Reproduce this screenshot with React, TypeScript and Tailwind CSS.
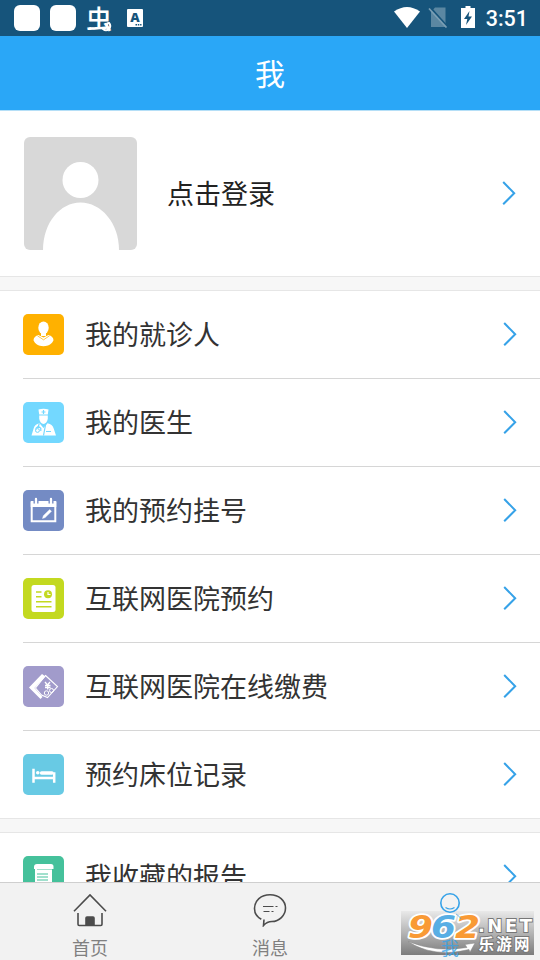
import React from "react"

const menuItems = [
	{ label: "我的就诊人", bg: "bg-[#ffb100]", icon: <PatientIcon /> },
	{ label: "我的医生", bg: "bg-[#73d8ff]", icon: <DoctorIcon /> },
	{ label: "我的预约挂号", bg: "bg-[#748bc4]", icon: <CalendarIcon /> },
	{ label: "互联网医院预约", bg: "bg-[#c3d920]", icon: <RecordIcon /> },
	{ label: "互联网医院在线缴费", bg: "bg-[#a19bcb]", icon: <PayIcon /> },
	{ label: "预约床位记录", bg: "bg-[#68cae4]", icon: <BedIcon /> },
]

function PatientIcon() {
	return (
		<svg viewBox="0 0 41 41" className="size-[41px]" fill="#fff">
			<ellipse cx="20.5" cy="13.8" rx="5.2" ry="6.3" />
			<path d="M18 18h5v4h-5z" />
			<path d="M15.5 21 20.500 23.500l5-2.500c3 .8 5 2.800 5 5.300-1 3-5 6-10 6s-9-3-10-6c0-2.500 2-4.500 5-5.300z" />
			<path
				d="m14.500 21.800 6 4 6-4"
				fill="none"
				stroke="#ffb100"
				strokeWidth=".7"
			/>
		</svg>
	)
}

function DoctorIcon() {
	return (
		<svg viewBox="0 0 41 41" className="size-[41px]" fill="#fff">
			<path d="M15.500 7.500q5-1.500 10 0l-.7 5h-8.600z" />
			<path d="M16.200 13.500h8.600v3.200q-1 4.800-4.300 5.300-3.300-.5-4.300-5.300z" />
			<path d="M16.500 21.300 20.500 26l4-4.700q5 1.200 6.100 5L33 33.500H8.500l2.200-7.200q1-3.800 5.800-5z" />
			<path d="M20.500 8v4M18.500 10h4" stroke="#73d8ff" strokeWidth="1.200" />
			<path
				d="m16.300 21.500-1 3m-2.300 5v-3.300l2.300-2 2.500 2V29m5-7.500-2.300 12m2.500-4h5"
				fill="none"
				stroke="#73d8ff"
				strokeWidth="1.200"
			/>
			<circle cx="14.500" cy="28.500" r="1.900" stroke="#73d8ff" />
		</svg>
	)
}

function CalendarIcon() {
	return (
		<svg viewBox="0 0 41 41" className="size-[41px]" fill="none" stroke="#fff">
			<path d="M8.700 13h23.600v18.300H8.700z" strokeWidth="2" />
			<path d="M7.700 11h25.600v6H7.700z" fill="#fff" stroke="none" />
			<path d="M13 9v4.500m15-4.500v4.500" stroke="#748bc4" strokeWidth="5" />
			<path d="M13 9v4.500m15-4.500v4.500" strokeWidth="2.300" strokeLinecap="round" />
			<path d="m19.500 28.500.8-2.800 6.400-6.200 1.800 1.800-6.300 6.300z" fill="#fff" strokeWidth=".4" />
		</svg>
	)
}

function RecordIcon() {
	return (
		<svg viewBox="0 0 41 41" className="size-[41px]">
			<rect x="8.500" y="7" width="24" height="27" rx="2.500" fill="#fff" />
			<path
				d="M13 14h5.500M13 18.700h5.500M13 23.700h15.500M13 28.700h15.500"
				stroke="#c3d920"
				strokeWidth="1.600"
			/>
			<circle cx="25" cy="16.300" r="4" fill="#c3d920" />
			<path d="M25 14v2.500h2.500" fill="none" stroke="#fff" strokeWidth="1.200" />
		</svg>
	)
}

function PayIcon() {
	return (
		<svg viewBox="0 0 41 41" className="size-[41px]" fill="none" stroke="#fff">
			<path d="M19 8 6 21.500 17.500 33l2-2-8-9L22.500 10.500z" fill="#fff" stroke="none" />
			<path d="m22.500 9.500 12 11-10 11-6-2.500-6-7z" strokeWidth="1.100" />
			<path
				d="m22 16 2.500 3 2.500-3m-5 3.500h5.500m-5.500 2h5.500M24.700 18.500v5"
				strokeWidth="1.300"
			/>
			<circle cx="23.500" cy="27" r="2.200" />
			<circle cx="28.500" cy="24.500" r="2" />
		</svg>
	)
}

function BedIcon() {
	return (
		<svg viewBox="0 0 41 41" className="size-[41px]" fill="none" stroke="#fff">
			<path d="M10.500 14.700v14m20.700-10.500v10.500" strokeWidth="2.500" />
			<path d="M10 24h22" strokeWidth="2.700" />
			<path d="M18.500 19h10.500" strokeWidth="3.300" strokeLinecap="round" />
			<circle cx="14.800" cy="18.700" r="1.800" fill="#fff" stroke="none" />
		</svg>
	)
}

function ReportIcon() {
	return (
		<svg viewBox="0 0 41 41" className="size-[41px]">
			<path d="M11 11q0-3 3-3h14q2.500 0 2.500 2.500V13H29v20H12V13h-1z" fill="#fff" />
			<path d="M14 13.500h15" stroke="#a5e0cd" strokeWidth="1" />
			<path d="M14 18h11M14 21h11M14 24h11" stroke="#45c19b" strokeWidth="1" />
		</svg>
	)
}

const Chevron = () => (
	<svg
		viewBox="0 0 14 24"
		className="mb-px h-6 w-3.5 shrink-0"
		fill="none"
		stroke="#36a2e8"
		strokeWidth="2"
	>
		<path d="m1.200 1 11 11.300-11 11" />
	</svg>
)

const MenuRow = (props: {
	label: string
	bg: string
	icon: React.ReactNode
	last?: boolean
}) => {
	const { label, bg, icon, last } = props

	return (
		<div
			className={`ml-[23px] flex h-[88px] items-center border-b pr-[23px] ${
				last ? "border-transparent" : "border-[#d6d6d6]"
			}`}
		>
			<div className={`size-[41px] shrink-0 overflow-hidden rounded-[5px] ${bg}`}>
				{icon}
			</div>
			<p className="mb-0.5 ml-[21px] flex-1 text-[27px] leading-10 text-[#333]">
				{label}
			</p>
			<Chevron />
		</div>
	)
}

const StatusBar = () => (
	<div className="flex h-9 shrink-0 items-center bg-[#16547b] pr-3 pl-3.5 text-white">
		<div className="size-[26px] rounded-md bg-white" />
		<div className="ml-2.5 size-[26px] rounded-md bg-white" />
		<div className="relative ml-2.5 h-9 w-[26px]">
			<p className="text-[26px] leading-9 font-medium">虫</p>
			<svg
				viewBox="0 0 10 12"
				className="absolute top-5 left-4 h-3 w-2.5"
				fill="none"
				stroke="#fff"
				strokeWidth="2"
				strokeLinecap="round"
			>
				<path d="M1 9q3 2.500 6 0 2.500-3 0-6Q4.500 3 5 5" />
			</svg>
		</div>
		<svg viewBox="0 0 16 18" className="ml-[15px] h-[18px] w-4">
			<rect width="16" height="18" rx="1" fill="#fff" />
			<text
				x="8"
				y="13"
				textAnchor="middle"
				fontSize="13"
				fontWeight="800"
				fill="#16547b"
				fontFamily="Open Sans, sans-serif"
			>
				A
			</text>
			<path d="M8.500 15.800h6" stroke="#16547b" strokeWidth="1.500" strokeDasharray="1.500 .8" />
		</svg>
		<div className="flex-1" />
		<svg viewBox="0 0 26 21" className="mb-0.5 h-[21px] w-[26px]">
			<path d="M0 4.500Q13-4.500 26 4.500L13 21z" fill="#fff" />
		</svg>
		<svg viewBox="0 0 20 22" className="mb-0.5 ml-[8px] h-[22px] w-5">
			<path d="M7 1.500h10.500V21H3V6z" fill="#5b87a2" />
			<path d="m2 1.500 17 19" stroke="#16547b" strokeWidth="2.500" />
			<path d="m1 2.500 17.500 19" stroke="#7b9fb5" strokeWidth="1.700" />
		</svg>
		<svg viewBox="0 0 14 22" className="mb-0.5 ml-[13px] h-[22px] w-3.5">
			<path d="M4.500 0h5v2H14v20H0V2h4.500z" fill="#fff" />
			<path d="M8.500 5 3 13h3.300L5 19l6-8.500H7.500z" fill="#16547b" />
		</svg>
		<p className="ml-[11px] pt-0.5 font-[Roboto,sans-serif] text-[21.500px] leading-9 font-medium">
			3:51
		</p>
	</div>
)

const Watermark = () => (
	<svg viewBox="0 0 133 44" className="absolute top-7 left-[401px] h-11 w-[133px]">
		<defs>
			<linearGradient id="plate" x1="0" y1="0" x2="0" y2="1">
				<stop offset="0" stopColor="#e9e9e9" />
				<stop offset=".5" stopColor="#b4b4b4" />
				<stop offset="1" stopColor="#7c7c7c" />
			</linearGradient>
		</defs>
		<rect width="133" height="44" fill="url(#plate)" />
		<path
			d="M7 30.500Q36 42 66 36.500l-2-3 10-1.500-5 9-1-2.500Q32 47 7 30.500z"
			fill="#fff"
			stroke="#888"
			strokeWidth=".5"
		/>
		<g
			fontFamily="DejaVu Sans, sans-serif"
			fontWeight="700"
			fontStyle="italic"
			fontSize="32"
			stroke="#fff"
			strokeWidth="3.500"
			strokeLinejoin="round"
			paintOrder="stroke"
		>
			<text x="7" y="27" fill="#f99a35" textLength="25" lengthAdjust="spacingAndGlyphs">
				9
			</text>
			<text x="30" y="27" fill="#58aee4" textLength="25" lengthAdjust="spacingAndGlyphs">
				6
			</text>
			<text x="54" y="27" fill="#f99a35" textLength="25" lengthAdjust="spacingAndGlyphs">
				2
			</text>
		</g>
		<g fill="#fff" stroke="#777" strokeWidth="1.800" paintOrder="stroke" fontWeight="700">
			<text
				x="77"
				y="21"
				fontSize="18"
				textLength="54"
				fontFamily="DejaVu Sans, sans-serif"
			>
				.NET
			</text>
			<text
				x="77.500"
				y="39"
				fontSize="15.500"
				textLength="51"
				fontFamily="Noto Sans CJK SC, sans-serif"
			>
				乐游网
			</text>
		</g>
	</svg>
)

const TabBar = () => (
	<div className="relative grid h-[78px] shrink-0 grid-cols-3 border-t border-[#cfcfcf] bg-[#f2f2f2] text-[18px] text-[#808080]">
		<Watermark />
		<div className="flex flex-col items-center pt-2.5">
			<svg
				viewBox="0 0 34 34"
				className="size-[34px]"
				fill="none"
				stroke="#4c4c4c"
				strokeWidth="1.600"
			>
				<path d="M1 18.200 17 2l16 16.200M5 20v11.300q0 1.200 1.200 1.200h21.600q1.200 0 1.200-1.200V20" />
				<path d="M13 32v-7q0-1 1-1h6q1 0 1 1v7z" fill="#4c4c4c" />
			</svg>
			<p className="mt-2 leading-6">首页</p>
		</div>
		<div className="flex flex-col items-center pt-2.5">
			<svg
				viewBox="0 0 34 34"
				className="size-[34px]"
				fill="none"
				stroke="#4c4c4c"
				strokeWidth="1.600"
			>
				<path d="M8.300 26.300C4 24 1.500 20 1.500 15.500 1.500 7.500 8 1.700 17 1.700S32.500 7.500 32.500 15 26 28.500 19 28.500q-5 0-8.500 4l.5-6" />
				<path d="M10 13.500h10.500m2 0h2M10.500 18.500h6m2 0h2" strokeWidth="1.100" />
			</svg>
			<p className="mt-2 leading-6">消息</p>
		</div>
		<div className="relative flex flex-col items-center pt-2.5 text-[#36a2e8]">
			<svg
				viewBox="0 0 34 34"
				className="size-[34px]"
				fill="none"
				stroke="currentColor"
				strokeWidth="1.600"
			>
				<circle cx="17" cy="10" r="9.200" />
				<path d="M12.500 14.500q4.500 3 9 0" strokeWidth="1.100" />
				<path d="M23 21q3 1.500 5 5" strokeWidth="1" opacity=".6" />
			</svg>
			<p className="mt-2 leading-6 opacity-80">我</p>
		</div>
	</div>
)

const App = () => {
	return (
		<div className="flex h-[960px] w-[540px] flex-col overflow-hidden bg-white font-['Noto_Sans_CJK_SC',sans-serif]">
			<StatusBar />
			<div className="flex h-[75px] shrink-0 items-center justify-center border-b border-[#b5dff7] bg-[#2aa7f7]">
				<p className="mb-0.5 text-[30px] leading-[44px] text-white">我</p>
			</div>
			<div className="min-h-0 flex-1 overflow-hidden">
				<div className="flex h-[165px] items-center pr-6 pl-6">
					<svg viewBox="0 0 113 113" className="size-[113px] rounded-md bg-[#d8d8d8]">
						<circle cx="56.500" cy="43" r="18" fill="#fff" />
						<path d="M19 113c0-27 17-47.500 37.500-47.500S95 86 95 113z" fill="#fff" />
					</svg>
					<p className="mb-0.5 ml-[30px] flex-1 text-[27px] leading-10 text-[#222]">
						点击登录
					</p>
					<Chevron />
				</div>
				<div className="h-[15px] border-y border-[#e6e6e6] bg-[#f7f7f7]" />
				{menuItems.map((item, index) => (
					<MenuRow
						key={item.label}
						label={item.label}
						bg={item.bg}
						icon={item.icon}
						last={index === menuItems.length - 1}
					/>
				))}
				<div className="-mt-px h-[15px] border-y border-[#e6e6e6] bg-[#f7f7f7]" />
				<MenuRow label="我收藏的报告" bg="bg-[#45c19b]" icon={<ReportIcon />} />
			</div>
			<TabBar />
		</div>
	)
}

export default App
